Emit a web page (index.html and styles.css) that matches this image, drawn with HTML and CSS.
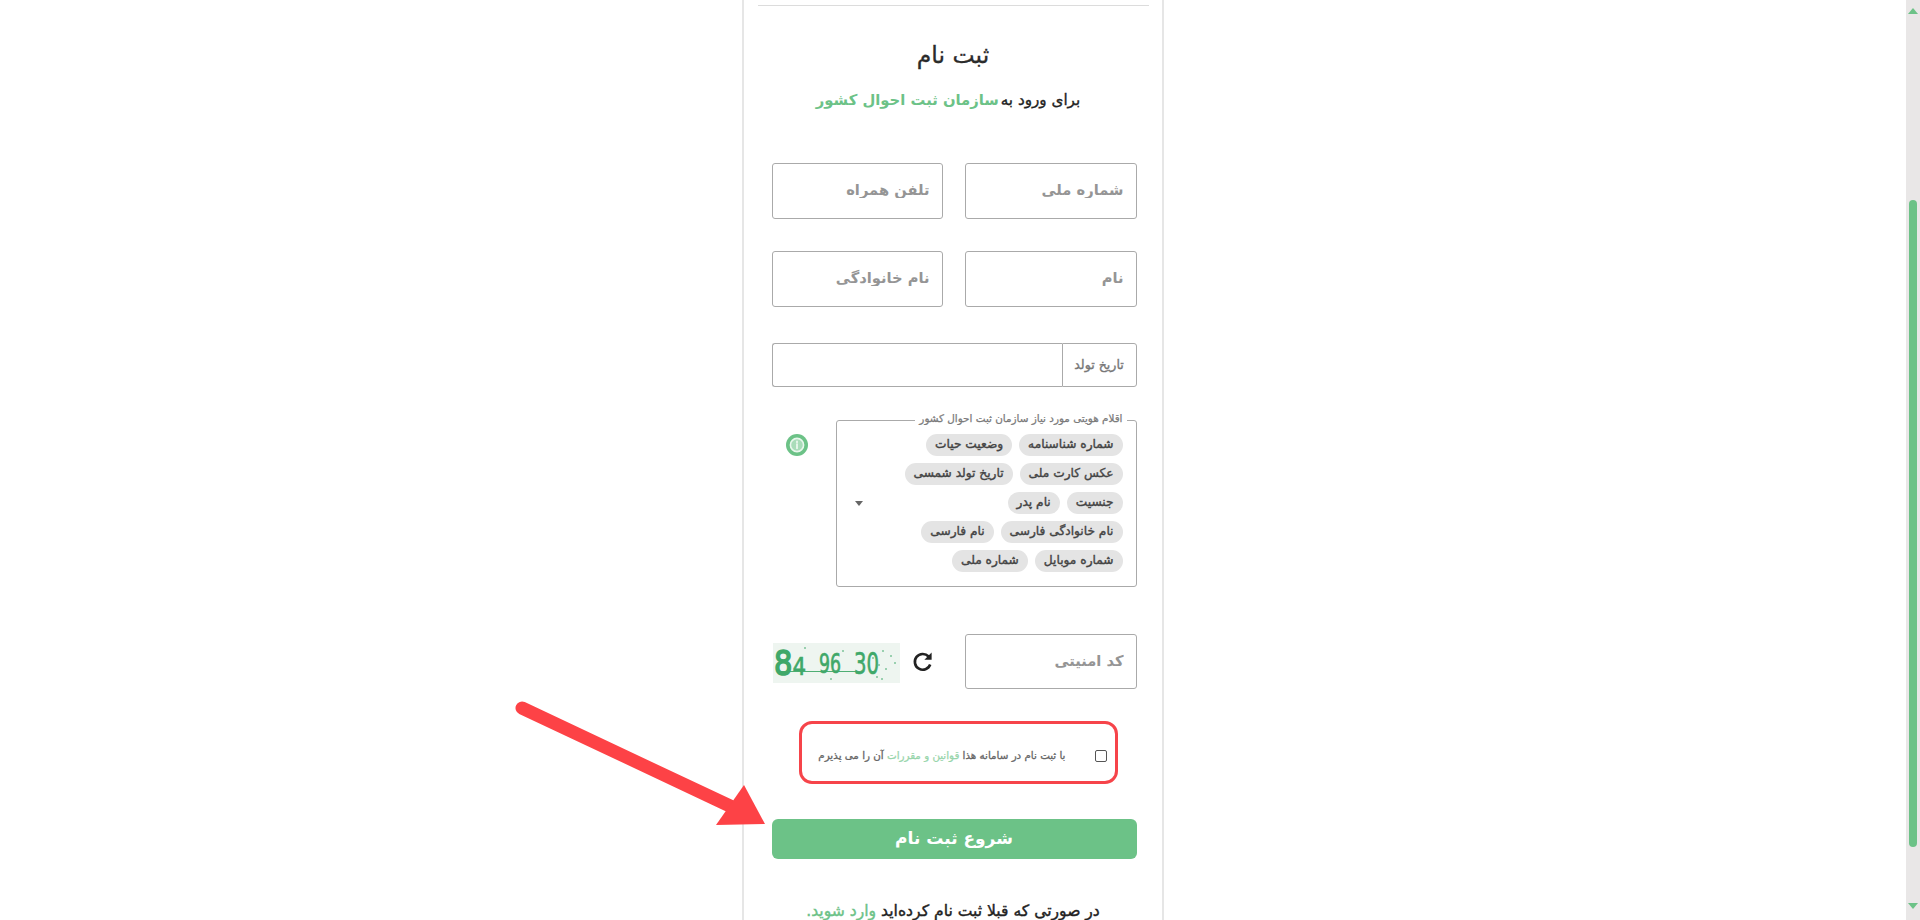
FILE: index.html
```html
<!DOCTYPE html>
<html lang="fa" dir="rtl">
<head>
<meta charset="utf-8">
<title>ثبت نام</title>
<link rel="stylesheet" href="styles.css">
</head>
<body>
<div class="page">
  <main class="stage">
    <section class="card">
      <hr class="rule">
      <h1 class="title">ثبت نام</h1>
      <p class="subtitle">برای ورود به <span class="accent">سازمان ثبت احوال کشور</span></p>
      <form class="form">
        <div class="row row-first">
          <input class="field" type="text" placeholder="شماره ملی">
          <input class="field" type="text" placeholder="تلفن همراه">
        </div>
        <div class="row row-next">
          <input class="field" type="text" placeholder="نام">
          <input class="field" type="text" placeholder="نام خانوادگی">
        </div>
        <div class="date-group">
          <span class="date-label">تاریخ تولد</span>
          <input class="date-input" type="text">
        </div>
        <div class="items-row">
          <fieldset class="items">
            <legend class="items-legend">اقلام هویتی مورد نیاز سازمان ثبت احوال کشور</legend>
            <div class="items-body">
              <div class="chips">
                <div class="chip-row"><span class="chip">شماره شناسنامه</span><span class="chip">وضعیت حیات</span></div>
                <div class="chip-row"><span class="chip">عکس کارت ملی</span><span class="chip">تاریخ تولد شمسی</span></div>
                <div class="chip-row"><span class="chip">جنسیت</span><span class="chip">نام پدر</span></div>
                <div class="chip-row"><span class="chip">نام خانوادگی فارسی</span><span class="chip">نام فارسی</span></div>
                <div class="chip-row"><span class="chip">شماره موبایل</span><span class="chip">شماره ملی</span></div>
              </div>
              <span class="caret"></span>
            </div>
          </fieldset>
          <svg class="info" viewBox="0 0 22 22" aria-hidden="true">
            <circle cx="11" cy="11" r="11" fill="#6cc287"/>
            <circle cx="11" cy="11" r="6.6" fill="#a9dcb9" stroke="#e9f7ed" stroke-width="1.6"/>
            <path d="M11 10v4.4M11 7.4v1" stroke="#f2faf4" stroke-width="1.6" stroke-linecap="round"/>
          </svg>
        </div>
        <div class="captcha-row">
          <input class="field" type="text" placeholder="کد امنیتی">
          <svg class="refresh" viewBox="0 0 24 24" aria-hidden="true">
            <path d="M19.2 14.5a7.9 7.9 0 1 1-1.6-8" fill="none" stroke="#222" stroke-width="2.6"/>
            <path d="M20.6 2.6v7.2h-7.2z" fill="#222"/>
          </svg>
          <svg class="captcha" viewBox="0 0 127 40" aria-label="84 96 30">
            <rect width="127" height="40" fill="#eef5f0"/>
            <path d="M8 28.5H85" stroke="#4fae74" stroke-width="1"/>
            <g class="cap-text">
              <text x="1" y="32" textLength="32" lengthAdjust="spacingAndGlyphs"><tspan class="cap-big">8</tspan><tspan class="cap-small">4</tspan></text>
              <text class="cap-mid" x="46" y="30" textLength="22" lengthAdjust="spacingAndGlyphs">96</text>
              <text class="cap-big2" x="81" y="31" textLength="25" lengthAdjust="spacingAndGlyphs">30</text>
            </g>
            <g fill="#7cc39a">
              <circle cx="110" cy="8" r="1"/><circle cx="118" cy="13" r="1"/><circle cx="106" cy="22" r="1"/>
              <circle cx="113" cy="26" r="1"/><circle cx="104" cy="34" r="1"/><circle cx="109" cy="36" r="1"/>
              <circle cx="70" cy="8" r="1"/><circle cx="32" cy="5" r="1"/><circle cx="58" cy="36" r="1"/>
              <circle cx="122" cy="20" r="1"/><circle cx="100" cy="15" r="1"/>
            </g>
          </svg>
        </div>
        <label class="terms">
          <input class="check" type="checkbox">
          <span class="terms-text">با ثبت نام در سامانه هذا <span class="terms-link">قوانین و مقررات</span> آن را می پذیرم</span>
        </label>
        <button class="submit" type="button">شروع ثبت نام</button>
      </form>
      <p class="login">در صورتی که قبلا ثبت نام کرده‌اید <span class="login-link">وارد شوید.</span></p>
    </section>
  </main>
  <aside class="scrollbar">
    <span class="tri tri-up"></span>
    <span class="thumb"></span>
    <span class="tri tri-down"></span>
  </aside>
  <svg class="arrow" viewBox="0 0 1920 920" aria-hidden="true">
    <path d="M522 708L730 806" stroke="#fd4246" stroke-width="13" stroke-linecap="round" fill="none"/>
    <path d="M765 824L716 825L744 785z" fill="#fd4246"/>
  </svg>
</div>
</body>
</html>
```
FILE: styles.css
```css
* { box-sizing: border-box; }
html, body { margin: 0; height: 920px; overflow: hidden; background: #fff; }
body { font-family: "DejaVu Sans", sans-serif; color: #222; }

.page { position: relative; display: flex; flex-direction: row-reverse; height: 920px; overflow: hidden; }
.stage { flex: 1; display: flex; justify-content: center; height: 920px; overflow: hidden; }

.card {
  width: 422px; height: 1000px; padding-top: 5px; flex: none;
  border-left: 2px solid #e6e6e6; border-right: 2px solid #e6e6e6;
  display: flex; flex-direction: column; align-items: center;
}
.rule { width: 391px; height: 1px; margin: 0; border: 0; background: #dcdcdc; }
.title { margin: 34px 0 0; font-size: 23.5px; line-height: 30px; font-weight: 400; text-align: center; color: #2b2b2b; -webkit-text-stroke: .3px #2b2b2b; }
.subtitle { margin: 18px 10px 0 0; font-size: 15.2px; line-height: 24px; font-weight: 400; color: #222; text-align: center; -webkit-text-stroke: .35px #222; }
.accent { margin-right: -3px; font-size: 14.8px; font-weight: 700; color: #6cc287; -webkit-text-stroke: 0; }

.form { width: 365px; margin: 51px 0 0 2px; display: flex; flex-direction: column; align-items: stretch; }
.row { display: flex; gap: 22px; }
.row-next { margin-top: 32px; }
.field {
  width: 171px; height: 56px; padding: 0 12px 3px; border: 1px solid #aaa; border-radius: 3px; background: #fff;
  font: 700 14.7px "DejaVu Sans", sans-serif; color: #888; outline: none;
}
.field:first-child { width: 172px; }
.field::placeholder { color: #959595; opacity: 1; }

.date-group { display: flex; height: 44px; margin-top: 36px; }
.date-label {
  width: 75px; padding-bottom: 2px; display: flex; align-items: center; justify-content: center;
  border: 1px solid #aaa; border-radius: 0 3px 3px 0;
  font-size: 12.6px; font-weight: 400; color: #777; -webkit-text-stroke: .35px #777;
}
.date-input { flex: 1; min-width: 0; border: 1px solid #aaa; border-right: 0; border-radius: 3px 0 0 3px; outline: none; background: #fff; }

.items-row { display: flex; gap: 28px; margin-top: 25px; align-items: flex-start; }
.items { width: 301px; height: 175px; margin: 0; padding: 5px 13px 0 18px; border: 1px solid #aaa; border-radius: 3px; min-inline-size: 0; }
.items-legend { margin-right: -4px; padding: 0 4px 5px; font-size: 10.4px; line-height: 12px; font-weight: 400; color: #7a7a7a; -webkit-text-stroke: .25px #7a7a7a; }
.items-body { display: flex; justify-content: space-between; align-items: center; }
.chips { display: flex; flex-direction: column; gap: 7px; }
.chip-row { display: flex; gap: 7px; }
.chip { height: 22px; padding: 0 9px; border-radius: 11px; background: #e4e4e4; font-size: 12.2px; font-weight: 400; line-height: 21px; color: #444; white-space: nowrap; -webkit-text-stroke: .4px #444; }
.caret { width: 0; height: 0; border-left: 4px solid transparent; border-right: 4px solid transparent; border-top: 5px solid #666; }
.info { width: 22px; height: 22px; margin-top: 22px; flex: none; }

.captcha-row { display: flex; align-items: center; margin-top: 47px; }
.captcha-row .field { height: 55px; }
.refresh { width: 24px; height: 24px; margin-right: 30px; flex: none; }
.captcha { width: 127px; height: 40px; margin-right: 11px; flex: none; margin-top: 2px; }
.cap-text { direction: ltr; font-family: "DejaVu Sans", sans-serif; fill: #3fa869; stroke: #3fa869; stroke-width: .7px; }
.cap-big { font-size: 34px; stroke-width: 1.6px; }
.cap-small { font-size: 25px; }
.cap-mid { font-size: 26px; }
.cap-big2 { font-size: 31px; }

.terms {
  width: 319px; height: 63px; margin: 32px 19px 0 0; padding: 4px 8px 0 8px;
  display: flex; align-items: center; gap: 29px;
  border: 3.5px solid #f6444a; border-radius: 13px;
}
.check { appearance: none; width: 12px; height: 12px; margin: 2px 0 0; flex: none; border: 1px solid #555; border-radius: 2px; background: #fff; }
.terms-text { font-size: 10.3px; font-weight: 400; color: #666; white-space: nowrap; -webkit-text-stroke: .3px #666; }
.terms-link { color: #97d5ab; -webkit-text-stroke: .25px #97d5ab; }

.submit {
  height: 40px; margin-top: 35px; padding: 0 0 3px; border: 0; border-radius: 6px; background: #6cc287; color: #fff;
  font: 700 17px "DejaVu Sans", sans-serif; letter-spacing: .5px;
}
.login { margin: 40px 0 0; font-size: 15.6px; line-height: 24px; font-weight: 400; color: #222; text-align: center; -webkit-text-stroke: .4px #222; }
.login-link { color: #6cc287; -webkit-text-stroke: .4px #6cc287; }

.scrollbar { width: 14px; height: 920px; flex: none; display: flex; flex-direction: column; align-items: center; background: #e9e7e7; padding-top: 8px; }
.tri { width: 0; height: 0; border-left: 5px solid transparent; border-right: 5px solid transparent; }
.tri-up { border-bottom: 6px solid #6cc287; }
.tri-down { border-top: 6px solid #6cc287; margin-top: 56px; }
.thumb { width: 8px; height: 647px; margin-top: 186px; border-radius: 4px; background: #6cc287; }

.arrow { position: absolute; left: 0; top: 0; width: 1920px; height: 920px; pointer-events: none; }
```
